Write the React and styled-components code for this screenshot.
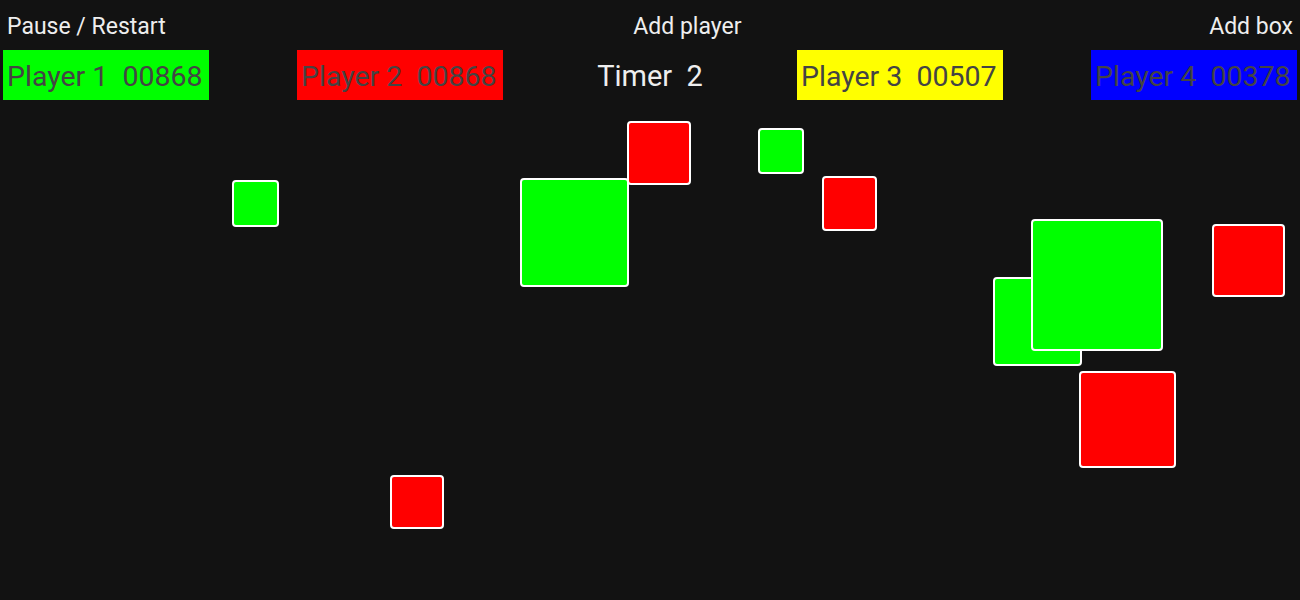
import React from "react";
import styled, { createGlobalStyle } from "styled-components";

const Global = createGlobalStyle`
  html, body { margin: 0; padding: 0; background: #121212; }
  body { font-family: Roboto, "Liberation Sans", sans-serif; color: #eeeeee; }
`;

const Page = styled.div`
  width: 1300px;
  height: 600px;
  display: flex;
  flex-direction: column;
  overflow: hidden;
  background: #121212;
`;

const Menu = styled.div`
  display: flex;
  justify-content: space-between;
  align-items: center;
  padding: 13px 7px 0;
  height: 27px;
`;

const MenuItem = styled.span`
  font-size: 23px;
  line-height: 27px;
  color: #eeeeee;
  cursor: pointer;
`;

const ScoreRow = styled.div`
  display: flex;
  justify-content: space-between;
  align-items: center;
  margin-top: 10px;
  padding: 0 3px;
  height: 50px;
`;

const Score = styled.div`
  box-sizing: border-box;
  width: 206px;
  height: 50px;
  padding: 2px 0 0 4px;
  display: flex;
  align-items: center;
  background: ${(p) => p.$color};
  color: #444444;
  font-size: 28.5px;
  white-space: pre;
`;

const Timer = styled.div`
  width: 118px;
  padding-top: 2px;
  text-align: center;
  font-size: 29px;
  color: #eeeeee;
  white-space: pre;
`;

const Field = styled.div`
  position: relative;
  flex: 1;
`;

const Box = styled.div`
  position: absolute;
  box-sizing: border-box;
  border: 2px solid #ffffff;
  border-radius: 4px;
  background: ${(p) => p.$color};
`;

const GREEN = "#00ff00";
const RED = "#ff0000";

const players = [
  { name: "Player 1", score: "00868", color: "#00ff00" },
  { name: "Player 2", score: "00868", color: "#ff0000" },
  { name: "Player 3", score: "00507", color: "#ffff00" },
  { name: "Player 4", score: "00378", color: "#0000ff" },
];

const FIELD_TOP = 100;
const boxes = [
  { x: 232, y: 180, s: 47, c: GREEN },
  { x: 520, y: 178, s: 109, c: GREEN },
  { x: 627, y: 121, s: 64, c: RED },
  { x: 758, y: 128, s: 46, c: GREEN },
  { x: 822, y: 176, s: 55, c: RED },
  { x: 993, y: 277, s: 89, c: GREEN },
  { x: 1031, y: 219, s: 132, c: GREEN },
  { x: 1212, y: 224, s: 73, c: RED },
  { x: 1079, y: 371, s: 97, c: RED },
  { x: 390, y: 475, s: 54, c: RED },
];

export default function App() {
  return (
    <Page>
      <Global />
      <Menu>
        <MenuItem>Pause / Restart</MenuItem>
        <MenuItem>Add player</MenuItem>
        <MenuItem>Add box</MenuItem>
      </Menu>
      <ScoreRow>
        <Score $color={players[0].color}>{`${players[0].name}  ${players[0].score}`}</Score>
        <Score $color={players[1].color}>{`${players[1].name}  ${players[1].score}`}</Score>
        <Timer>{"Timer  2"}</Timer>
        <Score $color={players[2].color}>{`${players[2].name}  ${players[2].score}`}</Score>
        <Score $color={players[3].color}>{`${players[3].name}  ${players[3].score}`}</Score>
      </ScoreRow>
      <Field>
        {boxes.map((b, i) => (
          <Box
            key={i}
            $color={b.c}
            style={{ left: b.x, top: b.y - FIELD_TOP, width: b.s, height: b.s }}
          />
        ))}
      </Field>
    </Page>
  );
}
